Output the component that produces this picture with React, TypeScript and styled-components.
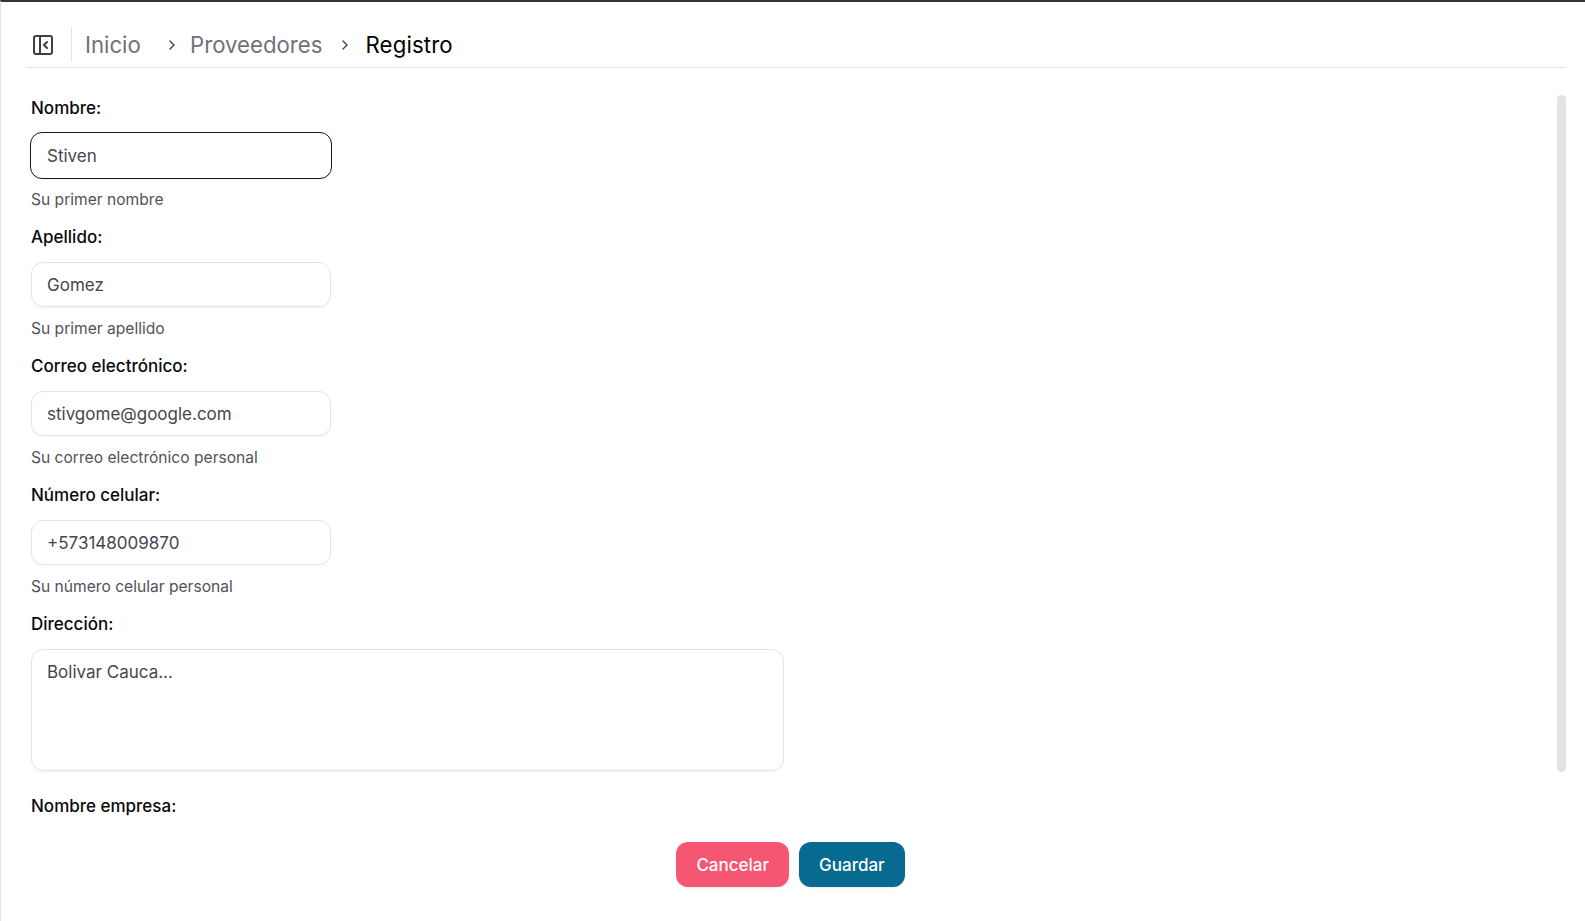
import React, { FC } from 'react';
import styled, { createGlobalStyle } from 'styled-components';
import { ChevronRight, PanelLeftClose } from 'lucide-react';

const GlobalStyle = createGlobalStyle`
  html, body {
    margin: 0;
    height: 100%;
    background: #fff;
    overflow: hidden;
  }
  body {
    font-family: Inter, "Noto Sans", sans-serif;
    color: #09090b;
  }
`;

const Page = styled.div`
  box-sizing: border-box;
  width: 1585px;
  height: 921px;
  border-top: 2px solid #333333;
  border-left: 1px solid #e4e4e7;
  padding: 0 19px 0 25px;
  display: flex;
  flex-direction: column;
`;

const Header = styled.header`
  height: 45px;
  flex: none;
  display: flex;
  align-items: center;
  border-bottom: 1px solid #e4e4e7;
  padding: 20px 0 0 7px;
  box-sizing: content-box;
`;

const ToggleButton = styled.button`
  border: 0;
  background: none;
  padding: 0;
  width: 24px;
  height: 24px;
  color: #3f3f46;
  display: flex;
  margin-left: -2px;
`;

const Separator = styled.div`
  width: 1px;
  height: 35px;
  background: #e4e4e7;
  margin: 0 13px 0 16px;
`;

const Crumbs = styled.nav`
  display: flex;
  align-items: center;
  font-size: 22.2px;
  line-height: 30px;
`;

const Crumb = styled.span<{ $current?: boolean; $width?: number }>`
  color: ${(p) => (p.$current ? '#000' : '#71717a')};
  width: ${(p) => (p.$width ? `${p.$width}px` : 'auto')};
  letter-spacing: ${(p) => (p.$current ? '0.15px' : '0')};
`;

const CrumbArrow = styled.span<{ $before: number; $after: number }>`
  display: flex;
  color: #3f3f46;
  margin: 0 ${(p) => p.$after}px 0 ${(p) => p.$before}px;
`;

const Body = styled.div`
  position: relative;
  flex: 1;
  min-height: 0;
  overflow: hidden;
`;

const ScrollThumb = styled.div`
  position: absolute;
  top: 27px;
  right: 0;
  width: 9px;
  height: 677px;
  border-radius: 5px;
  background: #e3e3e3;
`;

const Form = styled.form`
  display: flex;
  flex-direction: column;
  padding: 28px 0 0 5px;
  height: 774px;
  box-sizing: border-box;
  overflow: hidden;
`;

const Field = styled.div<{ $gap?: number }>`
  display: flex;
  flex-direction: column;
  margin-bottom: ${(p) => p.$gap ?? 14}px;
`;

const Label = styled.label`
  font-size: 17px;
  line-height: 24px;
  font-weight: 500;
  color: #09090b;
  margin-bottom: 13px;
`;

const TextInput = styled.input<{ $focused?: boolean }>`
  box-sizing: border-box;
  width: 300px;
  height: 45px;
  border-radius: 12px;
  border: 1px solid #e4e4e7;
  padding: 0 15px;
  font: inherit;
  font-size: 17px;
  color: #46464d;
  background: #fff;
  box-shadow: 0 1px 2px rgba(0, 0, 0, 0.04);
  outline: none;
  ${(p) =>
    p.$focused &&
    `
    border: 1.5px solid #18181b;
    width: 302px;
    height: 47px;
    margin: -1px 0 -1px -1px;
    padding: 0 16px;
  `}
`;

const TextArea = styled.textarea`
  box-sizing: border-box;
  width: 753px;
  height: 122px;
  border-radius: 12px;
  border: 1px solid #e4e4e7;
  padding: 10px 15px;
  font: inherit;
  font-size: 17px;
  line-height: 24px;
  color: #46464d;
  box-shadow: 0 1px 2px rgba(0, 0, 0, 0.04);
  outline: none;
  resize: none;
`;

const Helper = styled.p`
  margin: 11px 0 0;
  font-size: 15.6px;
  line-height: 22px;
  color: #52525b;
`;

const Actions = styled.div`
  flex: none;
  display: flex;
  justify-content: center;
  gap: 10px;
  padding-right: 11px;
`;

const ActionButton = styled.button<{ $tone: string }>`
  height: 45px;
  padding: 0 20px;
  border: 0;
  border-radius: 12px;
  font: inherit;
  font-size: 17px;
  font-weight: 500;
  color: #fff;
  background: ${(p) => p.$tone};
  box-shadow: 0 1px 2px rgba(0, 0, 0, 0.08);
`;

interface FieldData {
  label: string;
  value: string;
  helper: string;
  focused?: boolean;
}

const fields: FieldData[] = [
  { label: 'Nombre:', value: 'Stiven', helper: 'Su primer nombre', focused: true },
  { label: 'Apellido:', value: 'Gomez', helper: 'Su primer apellido' },
  { label: 'Correo electrónico:', value: 'stivgome@google.com', helper: 'Su correo electrónico personal' },
  { label: 'Número celular:', value: '+573148009870', helper: 'Su número celular personal' },
];

const App: FC = () => (
  <>
    <GlobalStyle />
    <Page>
      <Header>
        <ToggleButton type="button" aria-label="Alternar menú">
          <PanelLeftClose size={24} strokeWidth={2} />
        </ToggleButton>
        <Separator />
        <Crumbs>
          <Crumb $width={67}>Inicio</Crumb>
          <CrumbArrow $before={12} $after={10}>
            <ChevronRight size={16} />
          </CrumbArrow>
          <Crumb>Proveedores</Crumb>
          <CrumbArrow $before={15} $after={12}>
            <ChevronRight size={16} />
          </CrumbArrow>
          <Crumb $current>Registro</Crumb>
        </Crumbs>
      </Header>
      <Body>
        <Form>
          {fields.map((field) => (
            <Field key={field.label}>
              <Label>{field.label}</Label>
              <TextInput defaultValue={field.value} $focused={field.focused} />
              <Helper>{field.helper}</Helper>
            </Field>
          ))}
          <Field $gap={23}>
            <Label>Dirección:</Label>
            <TextArea defaultValue="Bolivar Cauca..." />
          </Field>
          <Field>
            <Label>Nombre empresa:</Label>
          </Field>
        </Form>
        <ScrollThumb />
        <Actions>
          <ActionButton type="button" $tone="#f55672">
            Cancelar
          </ActionButton>
          <ActionButton type="button" $tone="#066a91">
            Guardar
          </ActionButton>
        </Actions>
      </Body>
    </Page>
  </>
);

export default App;
